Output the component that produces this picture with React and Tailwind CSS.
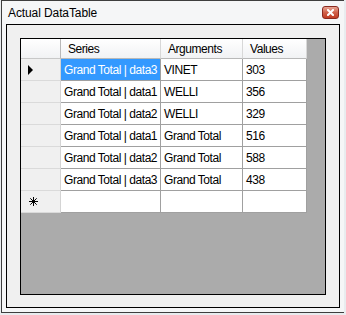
import React from "react";

const rows = [
  { series: "Grand Total | data3", arg: "VINET", val: "303", current: true },
  { series: "Grand Total | data1", arg: "WELLI", val: "356" },
  { series: "Grand Total | data2", arg: "WELLI", val: "329" },
  { series: "Grand Total | data1", arg: "Grand Total", val: "516" },
  { series: "Grand Total | data2", arg: "Grand Total", val: "588" },
  { series: "Grand Total | data3", arg: "Grand Total", val: "438" },
];

const font = { fontFamily: "'Liberation Sans', Arial, sans-serif" };

const CloseButton = () => (
  <div className="w-[17px] h-[13px] rounded-[3px] border border-[#8a2a20] bg-gradient-to-b from-[#e8a594] via-[#d0614a] to-[#c23b22] flex items-center justify-center">
    <svg width="7" height="7" viewBox="0 0 7 7">
      <path d="M1 1 L6 6 M6 1 L1 6" stroke="#ffffff" strokeWidth="2" strokeLinecap="square" />
    </svg>
  </div>
);

const RowHeader = ({ children }) => (
  <div className="w-[40px] h-[22px] shrink-0 bg-[#f0f0f0] border-r border-b border-r-[#d4d4d4] border-b-[#dadada] flex items-center pl-[7px]">
    {children}
  </div>
);

const Cell = ({ w, children, selected }) => (
  <div
    className={`${w} h-[22px] shrink-0 border-r border-b border-[#a0a0a0] flex items-center pl-[3px] overflow-hidden whitespace-nowrap text-[12px] tracking-[-0.45px] ${
      selected ? "bg-[#3399ff] text-white" : "bg-white text-black"
    }`}
  >
    {children}
  </div>
);

const HeadCell = ({ w, children }) => (
  <div className={`${w} h-[20px] shrink-0 border-r border-b border-r-[#d8d8d8] border-b-[#b8b8b8] bg-gradient-to-b from-white to-[#f1f2f4] flex items-center pl-[7px] text-[12px] tracking-[-0.45px] text-black`}>
    {children}
  </div>
);

export default function App() {
  return (
    <div className="w-[346px] h-[315px] bg-[#e9ecef] overflow-hidden" style={font}>
      <div className="ml-[1px] w-[343px] h-[313px] border-t border-l border-b border-[#3e3e3e] bg-[#f5f6f7] flex flex-col">
        {/* title bar */}
        <div className="h-[23px] flex items-center justify-between pl-[6px] pr-[5px] shrink-0">
          <span className="text-[12px] text-black tracking-[-0.1px]">Actual DataTable</span>
          <CloseButton />
        </div>

        {/* client area */}
        <div className="ml-[4px] w-[334px] h-[284px] border border-black bg-[#f0f0f0] pl-[13px] pt-[13px]">
          <div className="w-[306px] h-[257px] border border-black bg-[#ababab]">
            {/* header row */}
            <div className="flex">
              <div className="w-[40px] h-[20px] shrink-0 border-r border-b border-r-[#b8b8b8] border-b-[#c8c8c8] bg-gradient-to-b from-white to-[#f1f2f4]" />
              <HeadCell w="w-[100px]">Series</HeadCell>
              <HeadCell w="w-[82px]">Arguments</HeadCell>
              <HeadCell w="w-[64px]">Values</HeadCell>
            </div>

            {rows.map((r, i) => (
              <div key={i} className="flex">
                <RowHeader>
                  {r.current && (
                    <svg width="5" height="10" viewBox="0 0 5 10">
                      <polygon points="0,0 5,5 0,10" fill="#000000" />
                    </svg>
                  )}
                </RowHeader>
                <Cell w="w-[100px]" selected={r.current}>{r.series}</Cell>
                <Cell w="w-[82px]">{r.arg}</Cell>
                <Cell w="w-[64px]">{r.val}</Cell>
              </div>
            ))}

            {/* new row */}
            <div className="flex">
              <RowHeader>
                <svg width="9" height="9" viewBox="0 0 9 9" className="ml-[1px]">
                  <path d="M4.5 0 V9 M0 4.5 H9 M1.3 1.3 L7.7 7.7 M7.7 1.3 L1.3 7.7" stroke="#000000" strokeWidth="1" />
                </svg>
              </RowHeader>
              <Cell w="w-[100px]" />
              <Cell w="w-[82px]" />
              <Cell w="w-[64px]" />
            </div>
          </div>
        </div>
      </div>
    </div>
  );
}
